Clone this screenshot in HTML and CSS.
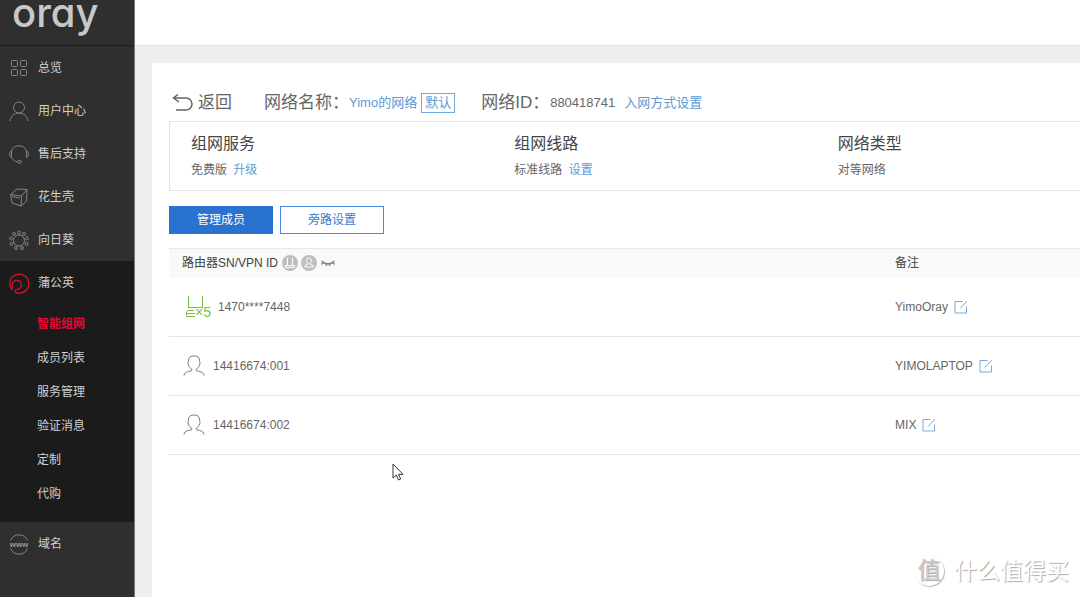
FILE: index.html
```html
<!DOCTYPE html>
<html lang="zh-CN">
<head>
<meta charset="utf-8">
<meta name="viewport" content="width=device-width, initial-scale=1">
<title>智能组网</title>
<link rel="stylesheet" href="styles.css">
</head>
<body>
<svg class="defs" aria-hidden="true">
  <symbol id="edit" viewBox="0 0 14 14"><path d="M8.500 1.500H1v11.500h11.500V6.500M6 8.500L13 1"/></symbol>
  <symbol id="person" viewBox="0 0 22 22"><path d="M1 20.500c.3-2.500 2-3.500 4.500-4 2-.4 3.500-.8 3.500-1.500C9 14 5.500 12 5.200 9.500L5 8c.3-1 .5-2 .8-4.500C7 1.500 9 1 11 1s4.200.5 5.200 2.500C16.500 6 16.700 7 17 8l-.2 1.500C16.500 12 13 14 13 15c0 .7 1.500 1.100 3.500 1.500 2.500.5 4.200 1.500 4.500 4"/></symbol>
</svg>
<div class="app">
  <aside class="sidebar">
    <div class="brand"><a class="logo" href="#">oray</a></div>
    <nav class="nav">
      <a class="nav-item" href="#"><svg class="nav-icon" viewBox="0 0 20 20"><rect x="2.500" y="2.500" width="6" height="6" rx="1"/><rect x="11.500" y="2.500" width="6" height="6" rx="1"/><rect x="2.500" y="11.500" width="6" height="6" rx="1"/><rect x="11.500" y="11.500" width="6" height="6" rx="1"/></svg>总览</a>
      <a class="nav-item" href="#"><svg class="nav-icon" viewBox="0 0 20 20"><circle cx="10" cy="6.500" r="5.500"/><path d="M1 20c.5-4.500 4-8 9-8s8.500 3.500 9 8"/></svg>用户中心</a>
      <a class="nav-item" href="#"><svg class="nav-icon" viewBox="0 0 20 20"><path d="M2.500 7a8 8 0 0 1 15 0M2.500 7C0 7.500 0 13 2.500 13.500zM17.500 7c2.500.5 2.500 6 0 6.500zM2.500 13.500c1.500 3 3.500 4 6 4.500"/><ellipse cx="10.500" cy="17.800" rx="2" ry="1.300"/></svg>售后支持</a>
      <a class="nav-item" href="#"><svg class="nav-icon" viewBox="0 0 20 20"><path d="M1.500 7.500L8 2l10 .5-5.500 6.500zM1.500 7.500L3 16l9 3 .5-10M12 19l5.500-5L18 2.500M3 9.500l7.500 1.500"/></svg>花生壳</a>
      <a class="nav-item" href="#"><svg class="nav-icon" viewBox="0 0 20 20"><circle cx="10" cy="10.500" r="5.500"/><g><circle cx="10" cy="2.500" r="1.500"/><circle cx="15" cy="4" r="1.500"/><circle cx="18" cy="8.500" r="1.500"/><circle cx="17.500" cy="14" r="1.500"/><circle cx="13" cy="18" r="1.500"/><circle cx="7" cy="18" r="1.500"/><circle cx="2.500" cy="14" r="1.500"/><circle cx="2" cy="8.500" r="1.500"/><circle cx="5" cy="4" r="1.500"/></g></svg>向日葵</a>
      <div class="nav-group">
        <a class="nav-item" href="#"><svg class="nav-icon nav-icon-red" viewBox="0 0 20 20"><path d="M3.300 17A9.500 9.500 0 1 1 6.500 19.300C5.800 17.800 6.200 17 7.500 16.500M3.300 17c-.3-1.500-.3-2.500.2-3.800a4.600 4.600 0 1 1 5 3.300H7.500"/></svg>蒲公英</a>
        <div class="subnav">
          <a class="sub-item active" href="#">智能组网</a>
          <a class="sub-item" href="#">成员列表</a>
          <a class="sub-item" href="#">服务管理</a>
          <a class="sub-item" href="#">验证消息</a>
          <a class="sub-item" href="#">定制</a>
          <a class="sub-item" href="#">代购</a>
        </div>
      </div>
      <a class="nav-item" href="#"><svg class="nav-icon" viewBox="0 0 20 20"><path d="M1.500 6.500a9.200 9.200 0 0 1 17 0M1.500 14.500a9.200 9.200 0 0 0 17 0"/><text class="www" x="10" y="13" text-anchor="middle">www</text></svg>域名</a>
    </nav>
  </aside>
  <div class="content">
    <header class="topbar"></header>
    <main class="panel">
      <div class="heading">
        <a class="back" href="#"><svg class="back-icon" viewBox="0 0 22 18"><path d="M1.500 4H14a6 6 0 0 1 0 12H4M6 .5L1.500 4 7 8"/></svg>返回</a>
        <div class="field name-field"><span class="label">网络名称：</span><a class="link" href="#">Yimo的网络</a><span class="tag">默认</span></div>
        <div class="field"><span class="label">网络ID：</span><span class="value">880418741</span><a class="link join" href="#">入网方式设置</a></div>
      </div>
      <section class="info">
        <div class="info-cell"><h2>组网服务</h2><p>免费版 <a class="link" href="#">升级</a></p></div>
        <div class="info-cell"><h2>组网线路</h2><p>标准线路 <a class="link" href="#">设置</a></p></div>
        <div class="info-cell"><h2>网络类型</h2><p>对等网络</p></div>
      </section>
      <div class="actions">
        <button class="btn primary" type="button">管理成员</button>
        <button class="btn" type="button">旁路设置</button>
      </div>
      <table class="members">
        <thead>
          <tr>
            <th class="col-id" scope="col"><div class="cell">路由器SN/VPN ID
              <span class="filters">
                <button class="icon-btn" type="button" aria-label="路由器"><svg width="16" height="16" viewBox="0 0 16 16"><circle class="disc" cx="8" cy="8" r="8"/><path class="glyph" d="M5.500 3v7M10.500 3v7M3.500 10.500h9v2h-9z"/></svg></button>
                <button class="icon-btn" type="button" aria-label="客户端"><svg width="16" height="16" viewBox="0 0 16 16"><circle class="disc" cx="8" cy="8" r="8"/><path class="glyph" d="M8 3a2.500 2.500 0 0 0-1.500 4.500L7 9l-3 1.500v1.500h8v-1.500L9 9l.5-1.500A2.500 2.500 0 0 0 8 3z"/></svg></button>
                <button class="icon-btn" type="button" aria-label="隐藏"><svg class="eye" width="16" height="16" viewBox="0 0 16 16"><path d="M1.500 6c4 3.500 9 3.500 13 0M3.500 7.500L1.500 9.500M6.500 8.500L6 11M9.500 8.500l.5 2.500M12.500 7.500l2 2"/></svg></button>
              </span></div></th>
            <th scope="col">备注</th>
          </tr>
        </thead>
        <tbody>
          <tr>
            <td><div class="cell router"><svg class="router-icon" width="28" height="24" viewBox="0 0 28 24"><path d="M5.500 1v12M19.500 1v12M5 12.500h15M11 15.500H5Q3.500 16 3.500 18v3.500H12M3.500 18.500H12"/><text x="12" y="22">×5</text></svg><span>1470****7448</span></div></td>
            <td><div class="cell remark">YimoOray<button class="icon-btn" type="button" aria-label="编辑备注"><svg class="edit" width="14" height="14"><use href="#edit"/></svg></button></div></td>
          </tr>
          <tr>
            <td><div class="cell client"><svg class="person" width="22" height="22"><use href="#person"/></svg><span>14416674:001</span></div></td>
            <td><div class="cell remark">YIMOLAPTOP<button class="icon-btn" type="button" aria-label="编辑备注"><svg class="edit" width="14" height="14"><use href="#edit"/></svg></button></div></td>
          </tr>
          <tr>
            <td><div class="cell client"><svg class="person" width="22" height="22"><use href="#person"/></svg><span>14416674:002</span></div></td>
            <td><div class="cell remark">MIX<button class="icon-btn" type="button" aria-label="编辑备注"><svg class="edit" width="14" height="14"><use href="#edit"/></svg></button></div></td>
          </tr>
        </tbody>
      </table>
    </main>
  </div>
</div>
<svg class="cursor" width="12" height="18" viewBox="0 0 12 18" aria-hidden="true"><path d="M1 1v14l3.300-3 2.200 5 2.200-1-2.200-4.700H11z"/></svg>
<div class="watermark"><span class="seal">值</span><span>什么值得买</span></div>
</body>
</html>
```
FILE: styles.css
```css
* { box-sizing: border-box; }

body {
  margin: 0;
  background: #efefef;
  color: #666;
  font: 12px/18px "Liberation Sans", "Noto Sans CJK SC", sans-serif;
}

a { text-decoration: none; color: inherit; }
h2, p { margin: 0; font-weight: 400; }
button { font: inherit; cursor: pointer; }
svg { flex: none; fill: none; }
.defs { display: none; }

.app { display: flex; min-height: 100vh; }

/* Sidebar */
.sidebar {
  flex: none;
  width: 135px;
  background: #2f2f2f;
  color: #d0d0d0;
  border-right: 1px solid #777;
}
.brand {
  height: 46px;
  padding-left: 12px;
  border-bottom: 1px solid #1c1c1c;
}
.logo {
  display: block;
  color: #c8c8c8;
  font: 500 40px/26px Inter, sans-serif;
  font-feature-settings: "cv11";
}
.nav-item {
  display: flex;
  align-items: center;
  gap: 9px;
  height: 43px;
  padding-left: 9px;
}
.nav-icon { width: 20px; height: 20px; stroke: #858585; overflow: visible; }
.nav-icon-red { stroke: #d5102f; stroke-width: 1.3; }
.www { font: 700 8px "Liberation Sans", sans-serif; fill: #999; stroke: none; }
.nav-group { background: #1b1b1b; padding-bottom: 11px; }
.subnav { padding-top: 3px; }
.sub-item { display: block; padding-left: 37px; line-height: 34px; }
.active { color: #e00b35; font-weight: 700; }

/* Content */
.content { flex: 1; min-width: 0; display: flex; flex-direction: column; }
.topbar { height: 46px; background: #fff; border-bottom: 1px solid #e2e2e2; }
.panel { flex: 1; margin: 17px 0 0 17px; padding: 24px 0 0 17px; background: #fff; }

.heading { display: flex; align-items: center; height: 32px; margin-bottom: 2px; padding-left: 3px; white-space: nowrap; }
.back { display: flex; align-items: center; gap: 4px; font-size: 17px; margin-right: 32px; }
.back-icon { width: 22px; height: 18px; stroke: #666; stroke-width: 1.5; }
.field { display: flex; align-items: center; font-size: 13px; }
.name-field { margin-right: 26px; }
.label { font-size: 17px; }
.value { margin-left: 1px; }
.link { color: #5b9bd5; }
.tag { margin-left: 4px; padding: 0 3px; border: 1px solid #6fa8dc; color: #5b9bd5; }
.join { margin-left: 9px; }

.info {
  display: grid;
  grid-template-columns: 323fr 323fr 242fr;
  padding: 10px 0 10px 21px;
  border: 1px solid #e5e5e5;
  border-right: 0;
}
.info h2 { font-size: 16px; line-height: 24px; color: #444; }
.info p { margin-top: 4px; line-height: 20px; }
.info .link { margin-left: 3px; }

.actions { display: flex; gap: 7px; margin: 15px 0 14px; }
.btn { width: 104px; height: 28px; padding: 0; border: 1px solid #4a89dc; background: #fff; color: #3878d0; }
.primary { background: #2a72d0; border-color: #2a72d0; color: #fff; }

.members { width: 100%; border-collapse: collapse; table-layout: fixed; }
th, td { padding: 0; text-align: left; font-weight: 400; border-bottom: 1px solid #e5e5e5; }
th { height: 29px; background: #f9f9f9; color: #444; border-top: 1px solid #e8e8e8; border-bottom: 0; }
td { height: 59px; }
.col-id { width: 79.7%; padding-left: 13px; }
.cell { display: flex; align-items: center; }
.filters { display: flex; gap: 3px; margin-left: 4px; }
.icon-btn { display: flex; padding: 0; border: 0; background: none; }
.disc { fill: #bfbfbf; }
.glyph { stroke: #fff; }
.eye { stroke: #777; stroke-width: 1.3; }
.router { padding-left: 14px; gap: 7px; }
.router-icon { stroke: #7ac143; }
.router-icon text { font: 14px "Liberation Sans", sans-serif; fill: #7ac143; stroke: none; }
.client { padding-left: 14px; gap: 8px; }
.person { stroke: #777; }
.remark { gap: 6px; }
.edit { stroke: #7da7d9; }

/* Overlays */
.cursor { position: absolute; left: 392px; top: 463px; fill: #fff; stroke: #334; }
.watermark {
  position: absolute;
  right: 11px;
  bottom: 10px;
  display: flex;
  align-items: center;
  gap: 10px;
  color: #fff;
  font-size: 23px;
  line-height: 32px;
  text-shadow: 1px 1px 1px #aaa;
}
.seal {
  width: 30px;
  height: 30px;
  border-radius: 50%;
  text-align: center;
  line-height: 28px;
  color: #ccc;
  box-shadow: 1px 1px 1px #bbb;
}
```
